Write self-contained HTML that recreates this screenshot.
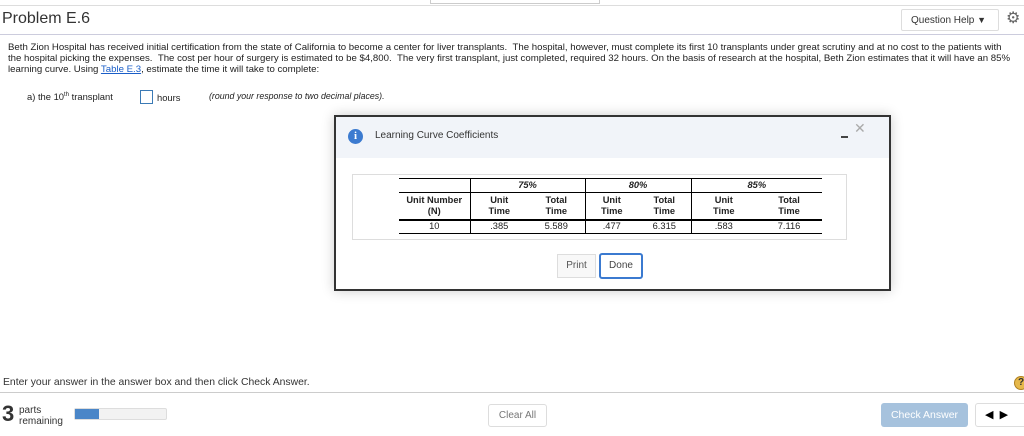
<!DOCTYPE html>
<html><head><style>
*{margin:0;padding:0;box-sizing:border-box}
body{width:1024px;height:436px;position:relative;background:#fff;font-family:"Liberation Sans",Arial,sans-serif;color:#222;overflow:hidden}
.a{position:absolute}
table{border-collapse:collapse;font-size:9.3px;font-family:"Liberation Sans",Arial,sans-serif}
td{text-align:center;padding:0;line-height:11px;white-space:nowrap}
</style></head><body>
<div class="a" style="left:0;top:5px;width:1024px;border-top:1px solid #ddd"></div>
<div class="a" style="left:430px;top:0;width:170px;height:4px;border:1px solid #ccc;border-top:none"></div>
<div class="a" style="left:2px;top:10px;font-size:16px;color:#333">Problem E.6</div>
<div class="a" style="left:0;top:34px;width:1024px;border-top:1px solid #ccd"></div>
<div class="a" style="left:901px;top:9px;width:98px;height:22px;border:1px solid #ddd;border-radius:2px;font-size:10px;color:#333;line-height:20px;padding-left:9px;white-space:nowrap">Question Help <span style="font-size:9px">▼</span></div>
<div class="a" style="left:1006px;top:10px;font-size:16px;color:#666;line-height:18px">⚙</div>
<div class="a" style="left:8px;top:42px;font-size:9.65px;line-height:11px;color:#222;white-space:nowrap">Beth Zion Hospital has received initial certification from the state of California to become a center for liver transplants. &nbsp;The hospital, however, must complete its first 10 transplants under great scrutiny and at no cost to the patients with<br>the hospital picking the expenses. &nbsp;The cost per hour of surgery is estimated to be $4,800. &nbsp;The very first transplant, just completed, required 32 hours. On the basis of research at the hospital, Beth Zion estimates that it will have an 85%<br>learning curve. Using <span style="color:#1a5ec8;text-decoration:underline">Table E.3</span>, estimate the time it will take to complete:</div>
<div class="a" style="left:27px;top:91px;font-size:9.4px">a) the 10<sup style="font-size:6px">th</sup> transplant</div>
<div class="a" style="left:140px;top:90px;width:13px;height:14px;border:1px solid #3b7ab5"></div>
<div class="a" style="left:157px;top:92px;font-size:9.4px">hours</div>
<div class="a" style="left:209px;top:91px;font-size:8.8px;font-style:italic">(round your response to two decimal places).</div>

<div class="a" style="left:334px;top:115px;width:557px;height:176px;border:2px solid #333;background:#fff;box-shadow:0 0 12px rgba(0,0,0,.2)">
 <div style="height:41px;background:#f1f4f9;position:relative">
  <div class="a" style="left:12px;top:12px;width:15px;height:15px;border-radius:50%;background:#3c7bd0;color:#fff;font-size:11px;font-weight:bold;text-align:center;line-height:15px;font-family:'Liberation Serif',serif">i</div>
  <div class="a" style="left:39px;top:13px;font-size:10px;color:#333">Learning Curve Coefficients</div>
  <div class="a" style="left:505px;top:19px;width:7px;height:2px;background:#444"></div>
  <div class="a" style="left:518px;top:4px;font-size:14px;color:#aaa;line-height:14px">✕</div>
 </div>
 <div class="a" style="left:16px;top:57px;width:495px;height:66px;border:1px solid #ddd"></div>
 <table class="a" style="left:63px;top:61px;width:423px;table-layout:fixed">
  <colgroup><col style="width:71px"><col style="width:58px"><col style="width:57px"><col style="width:53px"><col style="width:53px"><col style="width:65px"><col style="width:66px"></colgroup>
  <tr style="border-top:1px solid #000;border-bottom:1px solid #000;height:14px"><td></td><td colspan="2" style="border-left:1px solid #000;font-weight:bold;font-style:italic">75%</td><td colspan="2" style="border-left:1px solid #000;font-weight:bold;font-style:italic">80%</td><td colspan="2" style="border-left:1px solid #000;font-weight:bold;font-style:italic">85%</td></tr>
  <tr style="border-bottom:2px solid #000;height:27px;font-weight:bold"><td>Unit Number<br>(N)</td><td style="border-left:1px solid #000">Unit<br>Time</td><td>Total<br>Time</td><td style="border-left:1px solid #000">Unit<br>Time</td><td>Total<br>Time</td><td style="border-left:1px solid #000">Unit<br>Time</td><td>Total<br>Time</td></tr>
  <tr style="border-bottom:1px solid #000;height:14px"><td>10</td><td style="border-left:1px solid #000">.385</td><td>5.589</td><td style="border-left:1px solid #000">.477</td><td>6.315</td><td style="border-left:1px solid #000">.583</td><td>7.116</td></tr>
 </table>
 <div class="a" style="left:221px;top:137px;width:39px;height:24px;border:1px solid #ddd;background:#f8f8f8;font-size:10px;color:#555;text-align:center;line-height:22px">Print</div>
 <div class="a" style="left:263px;top:136px;width:44px;height:26px;border:2px solid #3b7ad0;border-radius:3px;font-size:10px;color:#444;text-align:center;line-height:22px">Done</div>
</div>

<div class="a" style="left:3px;top:377px;font-size:10.4px;color:#333">Enter your answer in the answer box and then click Check Answer.</div>
<div class="a" style="left:1014px;top:376px;width:14px;height:14px;border-radius:50%;background:#e6b84a;border:1px solid #b08020;font-size:10px;font-weight:bold;line-height:12px;padding-left:3px;color:#333">?</div>
<div class="a" style="left:0;top:392px;width:1024px;border-top:1px solid #ccc"></div>
<div class="a" style="left:2px;top:402px;font-size:22px;font-weight:bold;color:#333;line-height:24px">3</div>
<div class="a" style="left:19px;top:405px;font-size:10px;line-height:11px;color:#333">parts<br>remaining</div>
<div class="a" style="left:74px;top:408px;width:93px;height:12px;border:1px solid #ddd;border-radius:2px;background:#f2f2f2"><div style="width:24px;height:10px;background:#4a86c8"></div></div>
<div class="a" style="left:488px;top:404px;width:59px;height:23px;border:1px solid #ddd;border-radius:3px;font-size:10px;color:#777;text-align:center;line-height:21px">Clear All</div>
<div class="a" style="left:881px;top:403px;width:87px;height:24px;background:#a6c2dd;border-radius:3px;font-size:10.5px;color:#fff;text-align:center;line-height:24px">Check Answer</div>
<div class="a" style="left:975px;top:403px;width:52px;height:24px;border:1px solid #ddd;border-radius:3px;font-size:11px;line-height:22px;padding-left:9px;color:#000">◀&nbsp;&nbsp;▶</div>
</body></html>
